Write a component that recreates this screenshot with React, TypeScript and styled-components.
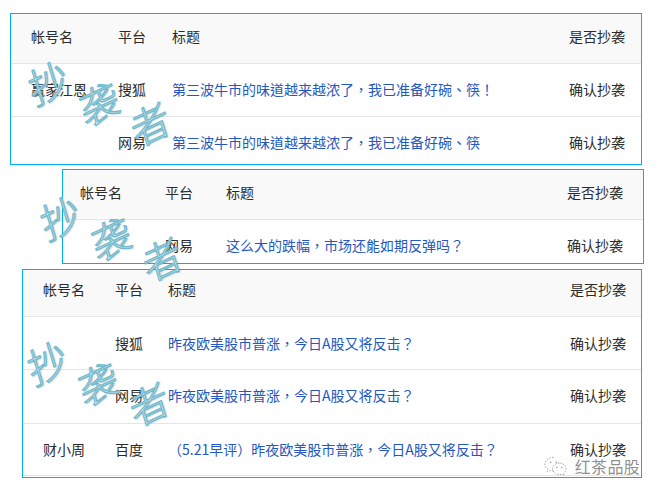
import styled, { createGlobalStyle } from "styled-components";

const GlobalStyle = createGlobalStyle`
  html, body {
    margin: 0;
    padding: 0;
    background: #fff;
  }
  body {
    font-family: "Noto Sans CJK SC", "Liberation Sans", sans-serif;
    color: #2b2b2b;
  }
`;

const Page = styled.div`
  position: relative;
  width: 659px;
  height: 494px;
  overflow: hidden;
  padding-top: 13px;
  box-sizing: border-box;
`;

type PanelProps = {
  $left: number;
  $width: number;
  $gap: number;
  $name: number;
  $platform: number;
  $pad: number;
  $right: number;
  $foot?: number;
};

const Panel = styled.div<PanelProps>`
  position: relative;
  box-sizing: border-box;
  margin-left: ${(p) => p.$left}px;
  margin-bottom: ${(p) => p.$gap}px;
  width: ${(p) => p.$width}px;
  padding-bottom: ${(p) => p.$foot || 0}px;
  border: 1px solid #00b0ee;
  --cols: ${(p) => p.$name}px ${(p) => p.$platform}px 1fr auto;
  --pad-left: ${(p) => p.$pad}px;
  --pad-right: ${(p) => p.$right}px;
`;

const Row = styled.div<{ $height: number; $top: number; $head?: boolean; $last?: boolean }>`
  display: grid;
  grid-template-columns: var(--cols);
  align-items: start;
  padding: ${(p) => p.$top}px var(--pad-right) 0 var(--pad-left);
  height: ${(p) => p.$height}px;
  box-sizing: border-box;
  font-size: 14px;
  line-height: 20px;
  background: ${(p) => (p.$head ? "#f9f9f9" : "#fff")};
  border-bottom: ${(p) => (p.$last ? "none" : "1px solid #e6e6e6")};
`;

const Text = styled.span`
  color: #2b2b2b;
  white-space: nowrap;
`;

const TitleLink = styled.a`
  font-family: "Noto Sans CJK TC", "Noto Sans CJK SC", sans-serif;
  color: #2458c0;
  white-space: nowrap;
`;

const StampLine = styled.div<{ $x: number; $y: number }>`
  position: absolute;
  z-index: 2;
  left: ${(p) => p.$x}px;
  top: ${(p) => p.$y}px;
  display: flex;
  gap: 15px;
  transform: rotate(22deg);
  transform-origin: 0 50%;
  pointer-events: none;
`;

const StampGlyph = styled.span`
  display: block;
  width: 40px;
  height: 40px;
  font-size: 40px;
  line-height: 40px;
  font-weight: 300;
  color: #e4f4f8;
  -webkit-text-stroke: 1.3px #72b9cd;
  text-shadow: 1px 1px 2px rgba(70, 110, 120, 0.45);
  transform: rotate(-47deg) skewX(-8deg);
`;

const Stamp = ({ x, y }: { x: number; y: number }) => (
  <StampLine $x={x} $y={y}>
    <StampGlyph>抄</StampGlyph>
    <StampGlyph>袭</StampGlyph>
    <StampGlyph>者</StampGlyph>
  </StampLine>
);

const BrandMark = styled.div`
  position: absolute;
  z-index: 3;
  right: 19px;
  bottom: 17px;
  display: flex;
  align-items: center;
  gap: 7px;
`;

const BrandName = styled.span`
  font-size: 16px;
  line-height: 20px;
  color: rgba(120, 120, 120, 0.85);
  text-shadow: 0 0 2px #fff, 0 0 2px #fff;
  letter-spacing: 0.3px;
`;

const BubbleIcon = () => (
  <svg width="25" height="22" viewBox="0 0 26 22" fill="none" stroke="#a4a4a4" strokeWidth="1" strokeDasharray="1.6 1.4">
    <path d="M11 2C6 2 2 5 2 9c0 2.200 1.200 4 3 5.300L4.400 17l3-1.500c1 .3 2 .4 3 .4" />
    <path d="M17 8c-4 0-7 2.600-7 6s3 6 7 6c.9 0 1.700-.1 2.500-.4l2.500 1.400-.6-2.400C23 17.400 24 15.800 24 14c0-3.400-3-6-7-6z" />
    <circle cx="8" cy="7" r=".8" fill="#9a9a9a" stroke="none" />
    <circle cx="14" cy="7" r=".8" fill="#9a9a9a" stroke="none" />
    <circle cx="14.500" cy="12.500" r=".8" fill="#9a9a9a" stroke="none" />
    <circle cx="19.500" cy="12.500" r=".8" fill="#9a9a9a" stroke="none" />
  </svg>
);

const Head = ({ height, top }: { height: number; top: number }) => (
  <Row $head $height={height} $top={top}>
    <Text>帐号名</Text>
    <Text>平台</Text>
    <Text>标题</Text>
    <Text>是否抄袭</Text>
  </Row>
);

const Item = ({
  name,
  platform,
  title,
  height,
  top,
  last,
}: {
  name?: string;
  platform: string;
  title: string;
  height: number;
  top: number;
  last?: boolean;
}) => (
  <Row $height={height} $top={top} $last={last}>
    <Text>{name}</Text>
    <Text>{platform}</Text>
    <TitleLink>{title}</TitleLink>
    <Text>确认抄袭</Text>
  </Row>
);

export default function App() {
  return (
    <Page>
      <GlobalStyle />
      <Panel $left={10} $width={632} $gap={4} $name={87} $platform={54} $pad={20} $right={16}>
        <Head height={50} top={12} />
        <Item name="赢家江恩" platform="搜狐" title="第三波牛市的味道越来越浓了，我已准备好碗、筷！" height={53} top={15} />
        <Item platform="网易" title="第三波牛市的味道越来越浓了，我已准备好碗、筷" height={47} top={15} last />
        <Stamp x={18} y={40} />
      </Panel>
      <Panel $left={62} $width={582} $gap={5} $name={85} $platform={61} $pad={17} $right={20}>
        <Head height={50} top={12} />
        <Item platform="网易" title="这么大的跌幅，市场还能如期反弹吗？" height={43} top={15} last />
        <Stamp x={-22} y={19} />
      </Panel>
      <Panel $left={22} $width={620} $gap={0} $name={72} $platform={53} $pad={20} $right={15} $foot={1}>
        <Head height={47} top={9} />
        <Item platform="搜狐" title="昨夜欧美股市普涨，今日A股又将反击？" height={53} top={16} />
        <Item platform="网易" title="昨夜欧美股市普涨，今日A股又将反击？" height={54} top={15} />
        <Item name="财小周" platform="百度" title="（5.21早评）昨夜欧美股市普涨，今日A股又将反击？" height={52} top={15} />
        <Stamp x={5} y={64} />
      </Panel>
      <BrandMark>
        <BubbleIcon />
        <BrandName>红茶品股</BrandName>
      </BrandMark>
    </Page>
  );
}
